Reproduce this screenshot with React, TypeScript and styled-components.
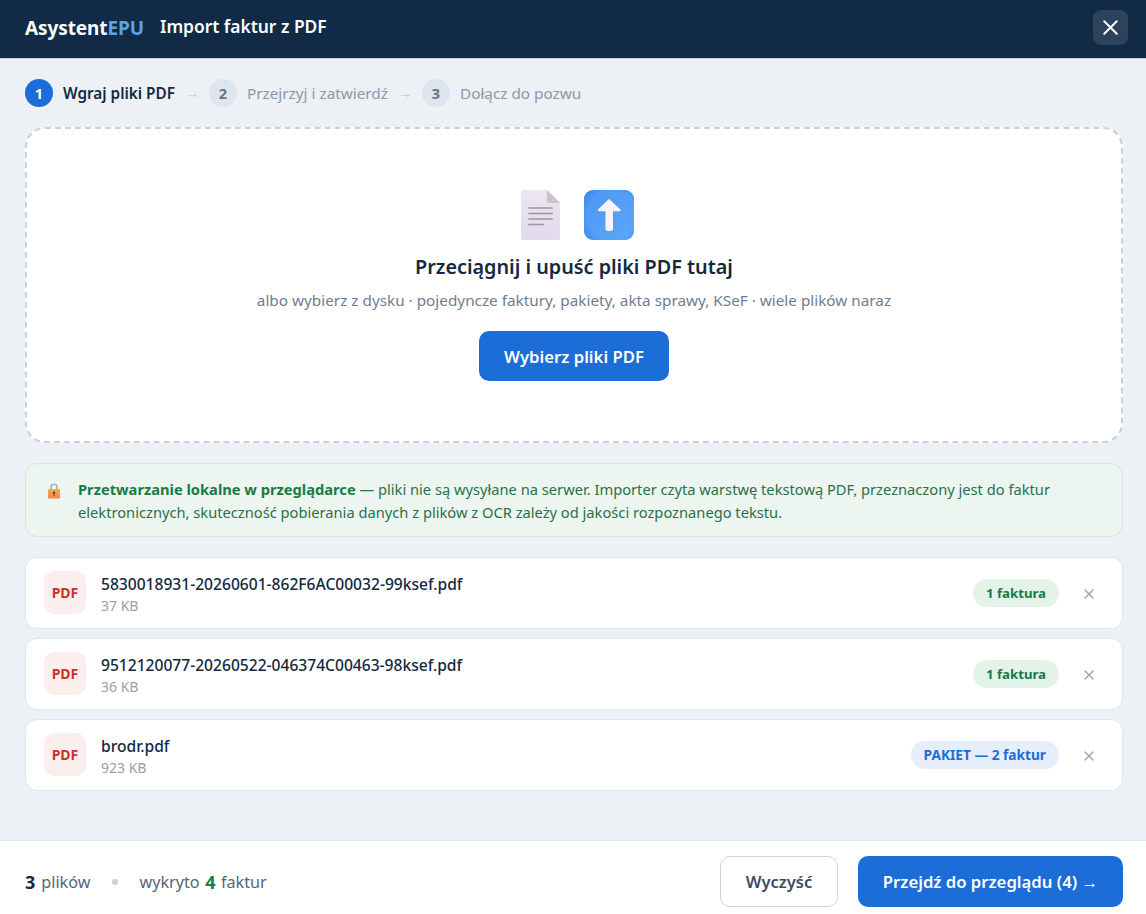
import styled, { createGlobalStyle } from "styled-components";
import { X } from "lucide-react";

const GlobalStyle = createGlobalStyle`
  html, body { margin: 0; padding: 0; height: 100%; }
  body { background: #edf0f5; font-family: "Noto Sans", "Open Sans", sans-serif; color: #12293f; }
  * { box-sizing: border-box; }
`;

const Page = styled.div`
  width: 1146px;
  height: 914px;
  display: flex;
  flex-direction: column;
  overflow: hidden;
`;

const Header = styled.header`
  height: 59px;
  flex: none;
  background: #112b46;
  border-bottom: 1px solid #c9d1dc;
  display: flex;
  align-items: center;
  padding: 0 18px 3px 25px;
`;

const Brand = styled.div`
  font-size: 19px;
  font-weight: 700;
  letter-spacing: -0.1px;
  color: #fff;
  margin-right: 16px;
  span { color: #5ba3e6; }
`;

const Title = styled.div`
  font-size: 17.4px;
  font-weight: 600;
  color: #fff;
  flex: 1;
  margin-top: -3px;
`;

const CloseButton = styled.button`
  width: 35px;
  height: 35px;
  border: 0;
  border-radius: 8px;
  background: #2c435b;
  color: #fff;
  display: flex;
  align-items: center;
  justify-content: center;
  padding: 0;
`;

const Body = styled.main`
  flex: 1;
  padding: 19px 23px 0 25px;
  display: flex;
  flex-direction: column;
`;

const Steps = styled.div`
  display: flex;
  align-items: center;
  height: 29px;
  margin-bottom: 20px;
`;

const StepNum = styled.div<{ $active?: boolean }>`
  width: 28px;
  height: 28px;
  border-radius: 50%;
  background: ${(p) => (p.$active ? "#1c6dd8" : "#dfe5ed")};
  color: ${(p) => (p.$active ? "#fff" : "#64748b")};
  font-size: 14.5px;
  font-weight: 700;
  display: flex;
  align-items: center;
  justify-content: center;
`;

const StepLabel = styled.div<{ $active?: boolean }>`
  margin-left: 10px;
  font-size: 15.3px;
  font-weight: ${(p) => (p.$active ? 600 : 400)};
  color: ${(p) => (p.$active ? "#12293f" : "#8c98a9")};
`;

const StepArrow = styled.div`
  width: 34px;
  text-align: center;
  font-family: "Liberation Sans", sans-serif;
  font-size: 14px;
  color: #bcc5d1;
`;

const Dropzone = styled.section`
  height: 316px;
  background: #fff;
  border: 2px dashed #c6d2e0;
  border-radius: 20px;
  display: flex;
  flex-direction: column;
  align-items: center;
  padding-top: 60px;
`;

const Icons = styled.div`
  display: flex;
  gap: 24px;
  align-items: center;
  height: 52px;
  padding-left: 6px;
`;

const DropTitle = styled.h2`
  margin: 13px 0 0;
  font-size: 19.8px;
  line-height: 26px;
  font-weight: 600;
  color: #12293f;
`;

const DropHint = styled.p`
  margin: 10px 0 0;
  font-size: 15.3px;
  line-height: 20px;
  color: #6f7d90;
`;

const PickButton = styled.button`
  margin-top: 21px;
  width: 190px;
  height: 50px;
  border: 0;
  border-radius: 10px;
  background: #1c6dd8;
  color: #fff;
  font: 600 16.7px "Noto Sans", sans-serif;
`;

const Notice = styled.div`
  margin-top: 20px;
  height: 74px;
  border: 1px solid #d3e6da;
  border-radius: 12px;
  background: #ecf5ef;
  display: flex;
  padding: 14px 20px;
  gap: 15px;
  font-size: 14.68px;
  line-height: 23px;
  color: #2a7049;
  strong { color: #1a7a45; font-weight: 700; }
`;

const LockWrap = styled.div`
  flex: none;
  width: 17px;
  padding-top: 4px;
`;

const Files = styled.div`
  margin-top: 20px;
  display: flex;
  flex-direction: column;
  gap: 9.5px;
`;

const FileRow = styled.div`
  height: 71.5px;
  background: #fff;
  border: 1px solid #e1e6ed;
  border-radius: 12px;
  display: flex;
  align-items: center;
  padding: 0 25px 0 18px;
`;

const PdfBadge = styled.div`
  width: 42px;
  height: 43px;
  border-radius: 10px;
  background: #fdeeee;
  color: #c4342b;
  font-size: 14px;
  font-weight: 700;
  display: flex;
  align-items: center;
  justify-content: center;
  margin-right: 15px;
`;

const FileInfo = styled.div`
  flex: 1;
  padding-top: 3px;
`;

const FileName = styled.div`
  font-size: 15.6px;
  line-height: 22px;
  font-weight: 500;
  color: #12293f;
`;

const FileSize = styled.div`
  font-size: 14px;
  line-height: 21px;
  color: #94a0b0;
`;

const Pill = styled.div<{ $blue?: boolean }>`
  height: 28.5px;
  padding: 0 13px;
  border-radius: 15px;
  background: ${(p) => (p.$blue ? "#e6eefb" : "#e3f3ea")};
  color: ${(p) => (p.$blue ? "#1c6dd8" : "#1a7a45")};
  font-size: ${(p) => (p.$blue ? "13.7px" : "13.2px")};
  font-weight: 700;
  display: flex;
  align-items: center;
  margin-right: 22px;
`;

const RemoveButton = styled.button`
  width: 16px;
  height: 16px;
  padding: 0;
  margin-top: 2px;
  border: 0;
  background: none;
  color: #9aa5b4;
  display: flex;
  align-items: center;
  justify-content: center;
`;

const Footer = styled.footer`
  height: 74px;
  flex: none;
  background: #fff;
  border-top: 1px solid #e1e6ed;
  display: flex;
  align-items: center;
  padding: 8px 23px 0 25px;
`;

const Summary = styled.div`
  flex: 1;
  display: flex;
  align-items: center;
  font-size: 16.2px;
  color: #54657a;
  b { font-size: 18px; font-weight: 700; color: #12293f; margin-right: 6px; }
  b.green { color: #1a7a45; margin: 0 5.5px; }
`;

const Dot = styled.span`
  width: 6px;
  height: 6px;
  border-radius: 50%;
  background: #c6d2e0;
  margin: 0 21px 0 22px;
`;

const GhostButton = styled.button`
  width: 118px;
  height: 51px;
  border: 1px solid #ccd4de;
  border-radius: 10px;
  background: #fff;
  color: #3a4c61;
  font: 600 16.5px "Noto Sans", sans-serif;
  margin-right: 20px;
`;

const NextButton = styled.button`
  width: 265px;
  height: 51px;
  border: 0;
  border-radius: 10px;
  background: #1c6dd8;
  color: #fff;
  font: 600 16.7px "Noto Sans", sans-serif;
  span { font-family: "Liberation Sans", sans-serif; font-weight: 400; }
`;

function DocIcon() {
  return (
    <svg width="39" height="50" viewBox="0 0 39 50">
      <defs>
        <linearGradient id="doc" x1="0" y1="0" x2="0" y2="1">
          <stop offset="0" stopColor="#ebe6f0" />
          <stop offset="1" stopColor="#e2daed" />
        </linearGradient>
      </defs>
      <path d="M2 0h24l13 13v35a2 2 0 0 1-2 2H2a2 2 0 0 1-2-2V2a2 2 0 0 1 2-2z" fill="url(#doc)" />
      <path d="M26 0l13 13H28a2 2 0 0 1-2-2z" fill="#c9c3cc" />
      <path d="M7.3 18h24.400M7.3 23.500h24.400M7.3 29h24.400M7.3 34.500h15.400" stroke="#9c95a3" strokeWidth="1.5" />
    </svg>
  );
}

function UploadIcon() {
  return (
    <svg width="50" height="50" viewBox="0 0 50 50">
      <defs>
        <linearGradient id="up" x1="0" y1="0" x2="1" y2="1">
          <stop offset="0" stopColor="#3f86ec" />
          <stop offset="1" stopColor="#5aa8fa" />
        </linearGradient>
        <radialGradient id="upGlow" cx="0.55" cy="0.5" r="0.7">
          <stop offset="0.7" stopColor="#5aa8fa" stopOpacity="0.5" />
          <stop offset="1" stopColor="#3a7be4" stopOpacity="0.5" />
        </radialGradient>
      </defs>
      <rect width="50" height="50" rx="9" fill="url(#up)" />
      <rect width="50" height="50" rx="9" fill="url(#upGlow)" />
      <path d="M25 9L14.3 19.300c-.8.800-.3 2 .8 2h6.400V38.500a2.500 2.500 0 0 0 2.500 2.500h2.500a2.500 2.500 0 0 0 2.500-2.500V21.300h6.400c1.100 0 1.600-1.200.8-2z" fill="#fdf3fd" />
    </svg>
  );
}

function LockIcon() {
  return (
    <svg width="16" height="16" viewBox="0 0 16 16">
      <defs>
        <linearGradient id="lock" x1="0" y1="0" x2="0" y2="1">
          <stop offset="0" stopColor="#fbb034" />
          <stop offset="1" stopColor="#f0854a" />
        </linearGradient>
      </defs>
      <path d="M5 7V4.200a3 3 0 0 1 6 0V7" fill="none" stroke="#b0aeb0" strokeWidth="1.6" />
      <rect x="2" y="6" width="12" height="9.500" rx="1.2" fill="url(#lock)" />
      <circle cx="8" cy="9.800" r="1.2" fill="#5c4a3a" />
      <rect x="7.500" y="10" width="1" height="3" fill="#5c4a3a" />
    </svg>
  );
}

const files = [
  { name: "5830018931-20260601-862F6AC00032-99ksef.pdf", size: "37 KB", tag: "1 faktura" },
  { name: "9512120077-20260522-046374C00463-98ksef.pdf", size: "36 KB", tag: "1 faktura" },
  { name: "brodr.pdf", size: "923 KB", tag: "PAKIET — 2 faktur", blue: true },
];

export default function App() {
  return (
    <>
      <GlobalStyle />
      <Page>
        <Header>
          <Brand>
            Asystent<span>EPU</span>
          </Brand>
          <Title>Import faktur z PDF</Title>
          <CloseButton>
            <X size={25} strokeWidth={1.9} />
          </CloseButton>
        </Header>
        <Body>
          <Steps>
            <StepNum $active>1</StepNum>
            <StepLabel $active>Wgraj pliki PDF</StepLabel>
            <StepArrow>→</StepArrow>
            <StepNum>2</StepNum>
            <StepLabel>Przejrzyj i zatwierdź</StepLabel>
            <StepArrow>→</StepArrow>
            <StepNum>3</StepNum>
            <StepLabel>Dołącz do pozwu</StepLabel>
          </Steps>
          <Dropzone>
            <Icons>
              <DocIcon />
              <UploadIcon />
            </Icons>
            <DropTitle>Przeciągnij i upuść pliki PDF tutaj</DropTitle>
            <DropHint>albo wybierz z dysku · pojedyncze faktury, pakiety, akta sprawy, KSeF · wiele plików naraz</DropHint>
            <PickButton>Wybierz pliki PDF</PickButton>
          </Dropzone>
          <Notice>
            <LockWrap>
              <LockIcon />
            </LockWrap>
            <div>
              <strong>Przetwarzanie lokalne w przeglądarce</strong> — pliki nie są wysyłane na serwer. Importer czyta warstwę tekstową PDF, przeznaczony jest do faktur elektronicznych, skuteczność pobierania danych z plików z OCR zależy od jakości rozpoznanego tekstu.
            </div>
          </Notice>
          <Files>
            {files.map((f) => (
              <FileRow key={f.name}>
                <PdfBadge>PDF</PdfBadge>
                <FileInfo>
                  <FileName>{f.name}</FileName>
                  <FileSize>{f.size}</FileSize>
                </FileInfo>
                <Pill $blue={f.blue}>{f.tag}</Pill>
                <RemoveButton>
                  <X size={16} strokeWidth={2} />
                </RemoveButton>
              </FileRow>
            ))}
          </Files>
        </Body>
        <Footer>
          <Summary>
            <b>3</b> plików
            <Dot />
            wykryto <b className="green">4</b> faktur
          </Summary>
          <GhostButton>Wyczyść</GhostButton>
          <NextButton>Przejdź do przeglądu (4) <span>→</span></NextButton>
        </Footer>
      </Page>
    </>
  );
}
